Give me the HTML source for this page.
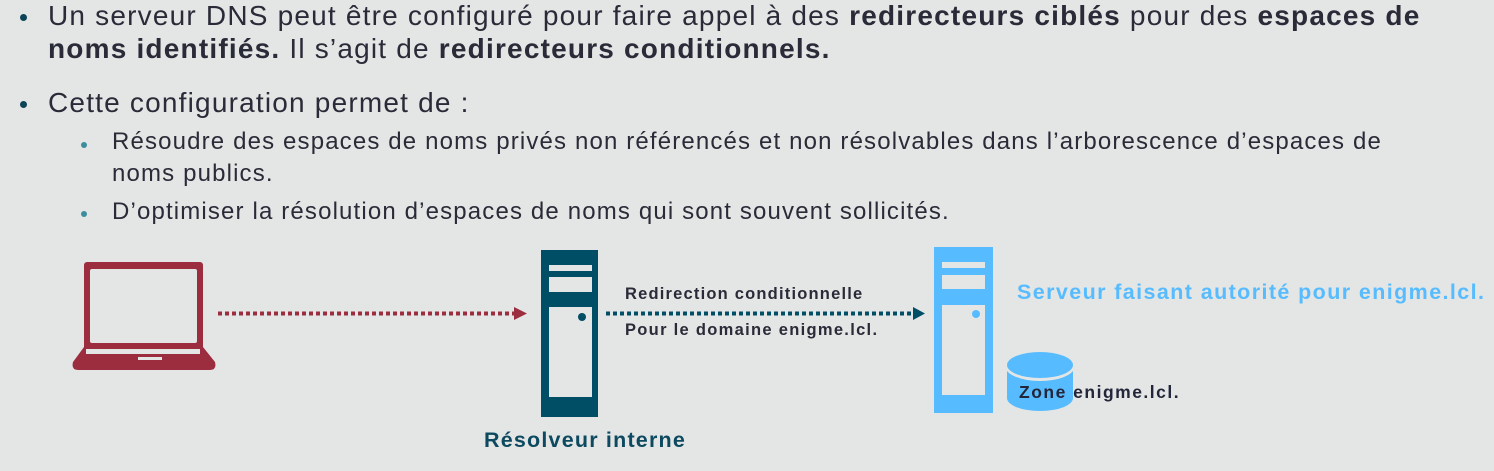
<!DOCTYPE html>
<html><head><meta charset="utf-8"><style>
body{margin:0;width:1494px;height:471px;background:#e4e6e5;position:relative;overflow:hidden;font-family:"Liberation Sans",sans-serif;color:#2a2b38}
.t{position:absolute;white-space:nowrap}
.l1{font-size:28px;left:48px;letter-spacing:1.2px}
.l2{font-size:24px;left:112px;letter-spacing:1.15px}
.b1{position:absolute;width:7px;height:7px;border-radius:50%;background:#0d4458}
.b2{position:absolute;width:6px;height:6px;border-radius:50%;background:#3a8e9e}
b{font-weight:bold}
</style></head><body>
<div class="b1" style="left:20px;top:14px"></div>
<div class="t l1" style="top:0px">Un serveur DNS peut être configuré pour faire appel à des <b>redirecteurs ciblés</b> pour des <b>espaces de</b></div>
<div class="t l1" style="top:33px"><b>noms identifiés.</b> Il s’agit de <b>redirecteurs conditionnels.</b></div>
<div class="b1" style="left:20px;top:101px"></div>
<div class="t l1" style="top:87px">Cette configuration permet de :</div>
<div class="b2" style="left:81px;top:142px"></div>
<div class="t l2" style="top:128px">Résoudre des espaces de noms privés non référencés et non résolvables dans l’arborescence d’espaces de</div>
<div class="t l2" style="top:160px">noms publics.</div>
<div class="b2" style="left:81px;top:211px"></div>
<div class="t l2" style="top:198px">D’optimiser la résolution d’espaces de noms qui sont souvent sollicités.</div>

<svg style="position:absolute;left:0;top:0" width="1494" height="471">
<rect x="84" y="262" width="119" height="91" rx="3" fill="#9b2d3f"/>
<rect x="90" y="269" width="107" height="74" rx="2" fill="#e4e6e5"/>
<path d="M84 347 H203 L215 362 Q217 370 210 370 H78 Q71 370 73 362 Z" fill="#9b2d3f"/>
<rect x="86" y="349" width="114" height="5" fill="#e4e6e5"/>
<rect x="138" y="357" width="24" height="3" fill="#e4e6e5"/>
<line x1="218" y1="313.5" x2="514" y2="313.5" stroke="#9b2d3f" stroke-width="4" stroke-dasharray="4 3"/>
<polygon points="514,307 527,313.5 514,320" fill="#9b2d3f"/>
<rect x="541" y="250" width="57" height="167" fill="#004d66"/>
<rect x="549" y="265" width="43" height="6" fill="#e4e6e5"/>
<rect x="549" y="277" width="43" height="15" fill="#e4e6e5"/>
<rect x="549" y="307" width="43" height="90" fill="#e4e6e5"/>
<circle cx="582" cy="317" r="4" fill="#004d66"/>
<line x1="606" y1="313.5" x2="913" y2="313.5" stroke="#004d66" stroke-width="4" stroke-dasharray="4 3"/>
<polygon points="913,307 925,313.5 913,320" fill="#004d66"/>
<rect x="934" y="247" width="59" height="166" fill="#57bcff"/>
<rect x="942" y="262" width="43" height="6" fill="#e4e6e5"/>
<rect x="942" y="275" width="43" height="14" fill="#e4e6e5"/>
<rect x="942" y="305" width="43" height="90" fill="#e4e6e5"/>
<circle cx="976" cy="314" r="4" fill="#57bcff"/>
<path d="M1007 365 V398 A33 13 0 0 0 1073 398 V365 Z" fill="#57bcff"/>
<ellipse cx="1040" cy="366" rx="35" ry="15" fill="#e4e6e5"/>
<ellipse cx="1040" cy="365" rx="33" ry="13" fill="#57bcff"/>
</svg>
<div class="t" style="left:625px;top:285px;font-size:16.5px;font-weight:bold;letter-spacing:1.2px">Redirection conditionnelle</div>
<div class="t" style="left:625px;top:321px;font-size:16.5px;font-weight:bold;letter-spacing:1.3px">Pour le domaine enigme.lcl.</div>
<div class="t" style="left:1017px;top:280px;font-size:21.5px;font-weight:bold;color:#57bcff;letter-spacing:1.4px">Serveur faisant autorité pour enigme.lcl.</div>
<div class="t" style="left:1019px;top:382px;font-size:17.5px;font-weight:bold;color:#23263a;letter-spacing:1.5px">Zone enigme.lcl.</div>
<div class="t" style="left:484px;top:428px;font-size:21.5px;font-weight:bold;color:#0d4a60;letter-spacing:1.2px">Résolveur interne</div>
</body></html>
